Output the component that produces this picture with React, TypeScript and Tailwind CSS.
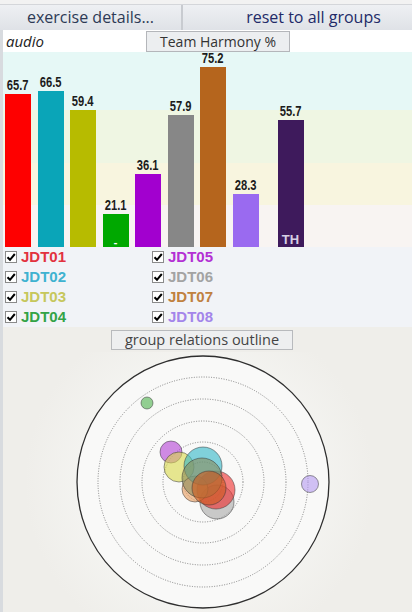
import React from 'react';

interface Bar { id: string; value: string; h: number; color: string; inner?: string; }

const bars: Bar[] = [
  { id: 'JDT01', value: '65.7', h: 153, color: 'bg-[#fe0000]' },
  { id: 'JDT02', value: '66.5', h: 156, color: 'bg-[#0aa5b8]' },
  { id: 'JDT03', value: '59.4', h: 137, color: 'bg-[#b7bb00]' },
  { id: 'JDT04', value: '21.1', h: 33, color: 'bg-[#00a800]', inner: '-' },
  { id: 'JDT05', value: '36.1', h: 73, color: 'bg-[#a200cf]' },
  { id: 'JDT06', value: '57.9', h: 132, color: 'bg-[#878787]' },
  { id: 'JDT07', value: '75.2', h: 180, color: 'bg-[#b5651d]' },
  { id: 'JDT08', value: '28.3', h: 53, color: 'bg-[#9a6af0]' },
];

const legend = [
  { id: 'JDT01', color: 'text-[#e2323f]' },
  { id: 'JDT05', color: 'text-[#b330d4]' },
  { id: 'JDT02', color: 'text-[#3fb2d0]' },
  { id: 'JDT06', color: 'text-[#a3a3a3]' },
  { id: 'JDT03', color: 'text-[#c6c75c]' },
  { id: 'JDT07', color: 'text-[#c0813f]' },
  { id: 'JDT04', color: 'text-[#33a346]' },
  { id: 'JDT08', color: 'text-[#a485ea]' },
];

const circles = [
  { cx: 217, cy: 502, r: 17, fill: '#a8a8a8' },
  { cx: 216, cy: 490, r: 19, fill: '#ee2a2a' },
  { cx: 171, cy: 452, r: 11, fill: '#b23fd6' },
  { cx: 179, cy: 467, r: 15, fill: '#d8d84a' },
  { cx: 195, cy: 489, r: 13, fill: '#e89a5a' },
  { cx: 203, cy: 466, r: 19, fill: '#2fb5c8' },
  { cx: 202, cy: 478, r: 20, fill: '#8a8a5a' },
  { cx: 209, cy: 488, r: 17, fill: '#cf5a1e' },
  { cx: 147, cy: 403, r: 6, fill: '#4cb04c' },
  { cx: 310, cy: 484, r: 8.5, fill: '#b49af2' },
];

const ui = { fontFamily: '"Open Sans", "Noto Sans", sans-serif' };
const arial = { fontFamily: '"Liberation Sans", Arial, sans-serif' };

const Check = () => (
  <span className="flex size-[12px] items-center justify-center border border-[#8a8a8a] bg-white">
    <svg width="10" height="10" viewBox="0 0 10 10">
      <path d="M1.5 5.2 4 7.8 8.8 2" fill="none" stroke="#000" strokeWidth="2" />
    </svg>
  </span>
);

const Value = ({ v }: { v: string }) => (
  <span className="mb-[3px] inline-block scale-x-[0.8] whitespace-nowrap text-[14px] font-bold leading-[11px] text-[#1c1c1c]" style={arial}>
    {v}
  </span>
);

export default function App() {
  return (
    <div className="flex h-[612px] w-[412px] flex-col overflow-hidden bg-[#efeeea]" style={ui}>
      {/* top strip */}
      <div className="h-[5px] border-b border-[#d4d6da] bg-[#f2f2f2]" />

      {/* buttons */}
      <div className="flex h-[27px]">
        <button className="w-[183px] border-r-2 border-[#c8cbd0] bg-gradient-to-b from-[#eef0f3] to-[#dfe2e7] text-[16px] text-[#2d3a55]">
          exercise details...
        </button>
        <button className="flex-1 bg-gradient-to-b from-[#eef0f3] to-[#dfe2e7] pl-[32px] text-[16px] text-[#222a68]">
          reset to all groups
        </button>
      </div>

      <div className="flex flex-col border-l-[3px] border-[#d8dbdf]">
        {/* audio row */}
        <div className="flex h-[22px] items-end bg-white">
          <span className="mb-[2px] ml-[3px] text-[15px] italic leading-[18px] text-[#222]">audio</span>
          <div className="ml-[102px] flex h-[21px] w-[144px] items-center justify-center border border-[#b4b6ba] bg-[#eceef0] text-[14px] text-[#333]">
            Team Harmony %
          </div>
        </div>

        {/* chart */}
        <div className="relative h-[195px]">
          <div className="flex h-full flex-col">
            <div className="h-[58px] bg-[#e6f8f6]" />
            <div className="h-[53px] bg-[#eff6e3]" />
            <div className="h-[42px] bg-[#f8f5df]" />
            <div className="flex-1 bg-[#f8f4f2]" />
          </div>
          <div className="absolute inset-0 flex items-end gap-[6.5px] pl-[2px]">
            {bars.map((b) => (
              <div key={b.id} className="flex w-[26px] flex-col items-center">
                <Value v={b.value} />
                <div className={`flex w-full items-end justify-center ${b.color}`} style={{ height: b.h }}>
                  {b.inner && <span className="text-[11px] font-bold leading-none text-white">{b.inner}</span>}
                </div>
              </div>
            ))}
            <div className="ml-[12.5px] flex w-[26px] flex-col items-center">
              <Value v="55.7" />
              <div className="flex h-[127px] w-full items-end justify-center bg-[#3e1a5c]">
                <span className="mb-[1px] text-[13px] font-bold leading-none text-[#d6cfe4]" style={arial}>TH</span>
              </div>
            </div>
          </div>
        </div>

        {/* legend */}
        <div className="grid grid-cols-[147px_1fr] bg-[#f1f3f7] pl-[2px]" style={arial}>
          {legend.map((l) => (
            <div key={l.id} className="flex h-[20px] items-center gap-[4px]">
              <Check />
              <span className={`text-[15px] font-bold ${l.color}`}>{l.id}</span>
            </div>
          ))}
        </div>

        {/* outline button */}
        <div className="flex h-[25px] items-center">
          <div className="ml-[108px] flex h-[20px] w-[182px] items-center justify-center border border-[#b8babd] bg-[#eeeff0] text-[14.5px] text-[#444]">
            group relations outline
          </div>
        </div>
      </div>

      {/* relations outline */}
      <div className="flex-1 border-l-[3px] border-[#d8dbdf] bg-[radial-gradient(circle_at_48%_50%,#fbfbfa_0%,#f4f4f1_45%,#efeeea_70%)]">
        <svg width="409" height="260" viewBox="3 352 409 260">
          <circle cx="203" cy="482" r="126" fill="#f9f9f8" stroke="#2e2e2e" strokeWidth="1.3" />
          {[105, 83, 61, 40, 20].map((r) => (
            <circle key={r} cx="203" cy="482" r={r} fill="none" stroke="#777" strokeWidth="0.9" strokeDasharray="1 1.5" />
          ))}
          {circles.map((c, i) => (
            <circle key={i} cx={c.cx} cy={c.cy} r={c.r} fill={c.fill} fillOpacity="0.6" stroke="#333" strokeOpacity="0.5" strokeWidth="1" />
          ))}
        </svg>
      </div>
    </div>
  );
}
